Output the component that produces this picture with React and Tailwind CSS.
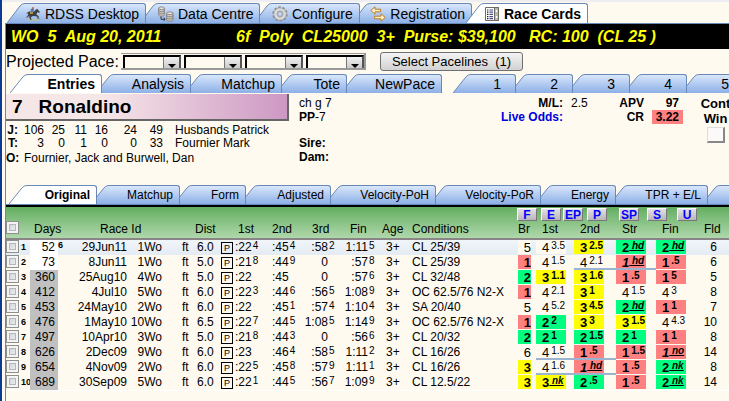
import { useState } from "react";

const mainTabs = [
  { label: "RDSS Desktop", width: "w-[139px]", icon: HorseIcon },
  { label: "Data Centre", width: "w-[120px]", icon: DatabaseIcon },
  { label: "Configure", width: "w-[104px]", icon: GearIcon },
  { label: "Registration", width: "w-[120px]", icon: ArrowsIcon },
  { label: "Race Cards", width: "w-[122px]", icon: CardIcon },
];

const entryTabs = [
  { label: "Entries", width: "w-[92px]" },
  { label: "Analysis", width: "w-[95px]" },
  { label: "Matchup", width: "w-[97px]" },
  { label: "Tote", width: "w-[71px]" },
  { label: "NewPace", width: "w-[101px]" },
];

const raceTabs = ["1", "2", "3", "4", "5"].map((label) => ({
  label,
  width: "w-[63px]",
}));

const viewTabs = [
  { label: "Original", width: "w-[88px]" },
  { label: "Matchup", width: "w-[89px]" },
  { label: "Form", width: "w-[72px]" },
  { label: "Adjusted", width: "w-[91px]" },
  { label: "Velocity-PoH", width: "w-[111px]" },
  { label: "Velocity-PoR", width: "w-[111px]" },
  { label: "Energy", width: "w-[81px]" },
  { label: "TPR + E/L", width: "w-[98px]" },
  { label: "", width: "w-[98px]" },
];

const colWidths = [
  "w-[24px]", "w-[36px]", "w-[61px]", "w-[35px]", "w-[35px]", "w-[24px]",
  "w-[14px]", "w-[37px]", "w-[28px]", "w-[34px]", "w-[40px]", "w-[38px]",
  "w-[106px]", "w-[18px]", "w-[38px]", "w-[42px]", "w-[40px]", "w-[40px]",
];

// Calls are [position, margin, colour]: g = gain, y = close, r = lead
const rows = [
  { days: "52", off: "6", date: "29Jun11", race: "1Wo", dist: "6.0", t: [":22 4", ":45 4", ":58 2", "1:11 5"], cond: "CL 25/39", br: ["5", ""], calls: [["4", "3.5", ""], ["3", "2.5", "y"], ["2", "hd", "g"], ["2", "hd", "g"]], fld: 6 },
  { days: "73", date: "8Jun11", race: "1Wo", dist: "5.0", t: [":21 8", ":44 9", "0", ":57 8"], cond: "CL 25/39", br: ["1", "r"], calls: [["4", "1.5", ""], ["4", "2.1", ""], ["1", "hd", "r"], ["1", ".5", "r"]], fld: 6, line: [1, 2] },
  { days: "360", date: "25Aug10", race: "4Wo", dist: "5.0", t: [":22", ":45", "0", ":57 6"], cond: "CL 32/48", br: ["2", "g"], calls: [["3", "1.1", "y"], ["3", "1.6", "y"], ["1", ".5", "r"], ["1", "5", "r"]], fld: 5 },
  { days: "412", date: "4Jul10", race: "5Wo", dist: "6.0", t: [":22 3", ":44 6", ":56 5", "1:08 9"], cond: "OC 62.5/76 N2-X", br: ["1", "r"], calls: [["4", "2.1", ""], ["3", "1", "y"], ["4", "1.5", ""], ["4", "3", ""]], fld: 8 },
  { days: "453", date: "24May10", race: "2Wo", dist: "6.0", t: [":22", ":45 1", ":57 4", "1:10 4"], cond: "SA 20/40", br: ["5", ""], calls: [["4", "5.2", ""], ["3", "4.5", "y"], ["2", "hd", "g"], ["1", "1", "r"]], fld: 7 },
  { days: "476", date: "1May10", race: "10Wo", dist: "6.5", t: [":22 7", ":44 5", "1:08 5", "1:14 9"], cond: "OC 62.5/76 N2-X", br: ["1", "r"], calls: [["2", "2", "g"], ["3", "3", "y"], ["3", "1.5", "y"], ["4", "4.3", ""]], fld: 10 },
  { days: "497", date: "10Apr10", race: "3Wo", dist: "5.0", t: [":21 8", ":44 3", "0", ":56 6"], cond: "CL 20/32", br: ["2", "g"], calls: [["2", "1", "g"], ["2", "1.5", "g"], ["2", "1", "g"], ["1", "1", "r"]], fld: 8 },
  { days: "626", date: "2Dec09", race: "9Wo", dist: "6.0", t: [":23", ":46 4", ":58 5", "1:11 2"], cond: "CL 16/26", br: ["6", ""], calls: [["4", "1.5", ""], ["1", ".5", "r"], ["1", "1.5", "r"], ["1", "no", "r"]], fld: 14, line: [0, 1] },
  { days: "654", date: "4Nov09", race: "2Wo", dist: "6.0", t: [":22 5", ":45 8", ":57 9", "1:11 1"], cond: "CL 16/26", br: ["3", "y"], calls: [["4", "1.6", ""], ["1", "hd", "r"], ["1", ".5", "r"], ["2", "nk", "g"]], fld: 8, line: [0, 1] },
  { days: "689", date: "30Sep09", race: "5Wo", dist: "6.0", t: [":22 1", ":44 5", ":56 7", "1:09 9"], cond: "CL 12.5/22", br: ["3", "y"], calls: [["3", "nk", "y"], ["2", ".5", "g"], ["1", ".5", "r"], ["2", "nk", "g"]], fld: 14 },
];

const callColors = {
  g: "bg-[#00ff80] font-bold",
  y: "bg-[#ffff00] font-bold",
  r: "bg-[#ff8080] font-bold",
  "": "bg-[#fffaf0]",
};

function HorseIcon() {
  return (
    <svg viewBox="0 0 16 16" className="h-4 w-4">
      <path d="M3 13h11v1.5H3z" fill="#b9c48f" />
      <path d="M1 7.5 4 5.6l5 .2 2.2-2.6 1.4-.2.5 1 1.9 2-.9.8-1.8-.6-1 2.4 2.5 1.6-.3 2-1-.2v-1.2l-3-.8-2.2.2-1.6 1.4 1 2.2-1.2.3-1.4-2.9.5-1.6-1.4 1.4-2 .3 1.8-2.1.3-1.7z" fill="#3d3f44" />
      <path d="M5.5 3.2 8 2l1 1.4-.6 2.8H6z" fill="#5578a8" />
      <path d="M7 1.2h1.8v1.5H7z" fill="#c8553a" />
      <path d="M5 6.2h3v1.6H5z" fill="#d9a441" />
      <path d="M1.5 11.5 4 10.4M12 12.4l2.5.2" stroke="#777" />
    </svg>
  );
}

function DatabaseIcon() {
  return (
    <svg viewBox="0 0 16 16" className="h-4 w-4" stroke="#77746f" strokeWidth=".8">
      <path d="M.7 2.3v6.4c0 2 5.6 2 5.6 0V2.3z" fill="#cdc9c2" />
      <ellipse cx="3.5" cy="2.2" rx="2.8" ry="1.3" fill="#efede8" />
      <path d="M.7 4.4c0 1.8 5.6 1.8 5.6 0M.7 6.6c0 1.8 5.6 1.8 5.6 0" fill="none" />
      <path d="M8.7 7.3v6.4c0 2 6.3 2 6.3 0V7.3z" fill="#cdc9c2" />
      <ellipse cx="11.8" cy="7.2" rx="3.1" ry="1.3" fill="#efede8" />
      <path d="M8.7 9.4c0 1.8 6.3 1.8 6.3 0M8.7 11.6c0 1.8 6.3 1.8 6.3 0" fill="none" />
      <path d="M3 10.5v2.8h4M5.6 11.8 7.2 13.3 5.6 14.8" fill="none" stroke="#333" strokeWidth="1" />
    </svg>
  );
}

function GearIcon() {
  return (
    <svg viewBox="0 0 16 16" className="h-4 w-4">
      <circle cx="8" cy="8" r="6.6" fill="none" stroke="#8e8e8e" strokeWidth="2.2" strokeDasharray="2.6 1.55" />
      <circle cx="8" cy="8" r="4.5" fill="none" stroke="#a6a6a6" strokeWidth="3.8" />
      <circle cx="8" cy="8" r="4.6" fill="none" stroke="#dcdcdc" strokeWidth="2.4" />
      <circle cx="8" cy="8" r="2.3" fill="#c5d8f3" stroke="#8e8e8e" strokeWidth=".6" />
    </svg>
  );
}

function ArrowsIcon() {
  return (
    <svg viewBox="0 0 16 16" className="h-4 w-4" fill="#fff1c9" stroke="#c07c1c" strokeLinejoin="round">
      <path d="M.8 4.5 5 .8v2.4h5.6v2.6H5v2.4z" />
      <path d="M15.2 11.5 11 7.8v2.4H4.6v2.6H11v2.4z" />
    </svg>
  );
}

function CardIcon() {
  return (
    <svg viewBox="0 0 16 16" className="h-4 w-4">
      <path d="M1.5 1.5h13v13h-13z" fill="#fff" stroke="#6b6a62" />
      <path d="M10.5 1.5h4v13h-4z" fill="#b9b7a6" stroke="#6b6a62" />
      <path d="M3 4h1.4M3 6.2h1.4M3 8.4h1.4M3 10.6h1.4M3 12.6h1.4" stroke="#222" strokeWidth="1.2" />
      <path d="M5.4 4h3.6M5.4 6.2h3.6M5.4 8.4h3.6M5.4 10.6h3.6M5.4 12.6h3.6" stroke="#4a4f8c" strokeWidth="1.2" />
      <path d="M11.8 4h1.5v2h-1.5zM11.8 10h1.5v2h-1.5z" fill="#fff" />
    </svg>
  );
}

function Tab({ tab, active, onClick, zIndex, textClass, padClass }) {
  const Icon = tab.icon;
  return (
    <button
      type="button"
      role="tab"
      aria-selected={active}
      onClick={onClick}
      style={{ zIndex }}
      className={`relative -ml-1.5 flex h-full shrink-0 first:ml-0 ${tab.width}`}
    >
      <svg viewBox="0 0 18 20" preserveAspectRatio="none" className="h-full w-[18px] shrink-0">
        <path d="M0 20 13 3Q15 .5 18 .5V20z" fill={active ? "#fff" : "url(#tabFill)"} />
        <path d="M0 20 13 3Q15 .5 18 .5" fill="none" stroke="#6888b8" />
      </svg>
      <span
        className={`flex h-full flex-1 items-center justify-end gap-1 rounded-tr-[3px] border-t border-r border-[#6888b8] whitespace-nowrap ${padClass} ${textClass} ${
          active ? "bg-white font-bold" : "bg-linear-to-b from-[#d9e7fb] to-[#8db0e6]"
        }`}
      >
        {Icon && <Icon />}
        {tab.label}
      </span>
    </button>
  );
}

function TabStrip({ label, tabs, initial, textClass, padClass = "pr-1.5", className }) {
  const [selected, setSelected] = useState(initial);
  return (
    <div role="tablist" aria-label={label} className={`isolate flex ${className}`}>
      {tabs.map((tab, i) => (
        <Tab
          key={i}
          tab={tab}
          active={selected === i}
          onClick={() => setSelected(i)}
          zIndex={selected === i ? 50 : tabs.length - i}
          textClass={textClass}
          padClass={padClass}
        />
      ))}
    </div>
  );
}

function PaceSelect({ index }) {
  return (
    <span className="relative flex h-[13px] w-[58px] border-2 border-b-0 border-t-black border-l-black border-r-[#555] bg-[#fffaf0]">
      <select aria-label={`Projected pace ${index}`} className="h-full w-full appearance-none text-xs outline-none">
        <option value=""></option>
        <option>Early</option>
        <option>Late</option>
      </select>
      <span className="pointer-events-none absolute top-0 right-0 flex h-full w-4 items-end justify-center border-l border-[#777] bg-linear-to-b from-[#f2f2f2] to-[#c9c9c9]">
        <svg viewBox="0 0 8 4" className="h-1 w-2">
          <path d="M0 0h8L4 4z" fill="#000" />
        </svg>
      </span>
    </span>
  );
}

function Box({ label }) {
  return (
    <input
      type="checkbox"
      aria-label={label}
      className="block h-[13px] w-[13px] shrink-0 appearance-none border border-[#8e8f8f] bg-linear-to-br from-[#c9cdd2] to-[#f6f6f6] shadow-[inset_0_0_0_2px_#f4f4f4,inset_0_0_0_3px_#b5b8bb] checked:bg-[#6888b8]"
    />
  );
}

function Time({ value, className = "justify-end" }) {
  const [main, tenth] = value.split(" ");
  return (
    <span className={`flex h-[15px] ${className}`}>
      {main}
      <span className="w-1.5 pl-px text-[10px] leading-[12px]">{tenth}</span>
    </span>
  );
}

function Call({ call, lined }) {
  const [pos, margin, color] = call;
  const isWord = /[a-z]/.test(margin);
  return (
    <div className="relative">
      <div className={`mb-px flex h-[14px] w-[30px] pl-1.5 leading-[15px] ${callColors[color]}`}>
        <span className={`text-[13px] ${isWord && pos === "1" ? "italic" : ""}`}>{pos}</span>
        {isWord ? (
          <span className="text-[10px] leading-[12px] whitespace-pre italic underline"> {margin}</span>
        ) : (
          <span className="pl-0.5 text-[10px] leading-[12px]">{margin}</span>
        )}
      </div>
      {lined && <div className="absolute right-0 -bottom-px left-0 z-10 h-0.5 bg-[#9db3d2]" />}
    </div>
  );
}

function SortButton({ children, className }) {
  return (
    <button
      type="button"
      className={`h-[13px] w-5 border border-t-white border-r-[#777] border-b-[#777] border-l-white bg-linear-to-b from-[#e4e0e4] to-[#b9b5b9] text-center text-xs leading-[12px] font-bold text-[#0000ff] ${className}`}
    >
      {children}
    </button>
  );
}

function RaceHeader() {
  return (
    <header className="flex h-[25px] items-center bg-black pl-[5px] text-base font-bold whitespace-pre text-[#ffff00] italic">
      <h1 className="w-[225px]">{"WO  5  Aug 20, 2011"}</h1>
      <p>{"6f  Poly  CL25000  3+  Purse: $39,100   RC: 100  (CL 25 )"}</p>
    </header>
  );
}

function HorsePanel() {
  return (
    <section className="flex h-[92px] justify-between pt-px text-xs leading-[14px] whitespace-nowrap">
      <div className="w-[283px] shrink-0">
        <h2 className="flex h-[27px] items-center gap-4 border-r-2 border-b-2 border-[#666] bg-linear-to-r from-[#f5e6e8] from-35% to-[#cd98c3] pl-1.5 text-[19px] font-bold">
          <span>7</span>
          <span>Ronaldino</span>
        </h2>
        <table className="mt-[3px] table-fixed text-right leading-[13px]">
          <tbody>
            {[
              ["J:", 106, 25, 11, 16, 24, 49, "Husbands Patrick"],
              ["T:", 3, 0, 1, 0, 0, 33, "Fournier Mark"],
            ].map(([role, a, b, c, d, e, f, name]) => (
              <tr key={role}>
                <th scope="row" className="w-[12px]">{role}</th>
                <td className="w-[26px]">{a}</td>
                <td className="w-[21px]">{b}</td>
                <td className="w-[22px]">{c}</td>
                <td className="w-[21px]">{d}</td>
                <td className="w-[29px]">{e}</td>
                <td className="w-[26px]">{f}</td>
                <td className="pl-3 text-left">{name}</td>
              </tr>
            ))}
          </tbody>
        </table>
        <p className="mt-px">
          <b className="inline-block w-[18px]">O:</b>Fournier, Jack and Burwell, Dan
        </p>
      </div>
      <div className="flex-1 pt-0.5 pl-2.5">
        <p>ch g 7</p>
        <p><b>PP</b>-7</p>
        <p className="mt-3 font-bold">Sire:</p>
        <p className="font-bold">Dam:</p>
      </div>
      <dl className="grid h-fit grid-cols-[81px_29px_36px_31px] gap-x-2 pt-0.5 font-bold">
        <dt className="text-right">M/L:</dt>
        <dd className="font-normal">2.5</dd>
        <dt className="text-right">APV</dt>
        <dd className="pr-1 text-right">97</dd>
        <dt className="text-right text-[#0000e0]">Live Odds:</dt>
        <dd></dd>
        <dt className="text-right">CR</dt>
        <dd className="bg-[#ff8080] pr-1 text-right">3.22</dd>
      </dl>
      <label className="ml-[19px] flex w-[27px] shrink-0 flex-col items-center pt-0.5 text-[13px] leading-[15px] font-bold">
        <span>Cont</span>
        <span>Win</span>
        <input
          type="checkbox"
          className="mt-px h-4 w-[18px] appearance-none border border-t-[#ddd] border-r-2 border-r-[#888] border-b-2 border-b-[#888] border-l-[#ddd] bg-[#fcfaf8] checked:bg-[#6888b8]"
        />
      </label>
    </section>
  );
}

function PastPerformances() {
  return (
    <table className="w-full table-fixed border-separate border-spacing-0 text-xs leading-[15px] whitespace-nowrap">
      <colgroup>
        {colWidths.map((width, i) => (
          <col key={i} className={width} />
        ))}
        <col />
      </colgroup>
      <thead className="bg-linear-to-b from-[#62ae60] to-[#b4dab0] [&_th]:p-0 [&_th]:font-normal">
        <tr className="h-[14px]">
          <th colSpan={13}></th>
          <th colSpan={6}>
            <div className="-ml-px flex pt-px">
              <SortButton>F</SortButton>
              <SortButton className="ml-1">E</SortButton>
              <SortButton className="ml-0.5">EP</SortButton>
              <SortButton className="ml-1">P</SortButton>
              <SortButton className="ml-3">SP</SortButton>
              <SortButton className="ml-2">S</SortButton>
              <SortButton className="ml-2.5">U</SortButton>
            </div>
          </th>
        </tr>
        <tr className="h-[19px] text-left [&_th]:border-b-2 [&_th]:border-[#8a8486]">
          <th className="align-top"><Box label="Select all" /></th>
          <th><span className="pl-1">Days</span></th>
          <th colSpan={2}><span className="pl-[34px]">Race Id</span></th>
          <th colSpan={2}><span className="pl-[33px]">Dist</span></th>
          <th colSpan={2}><span className="pl-[17px]">1st</span></th>
          <th>2nd</th>
          <th><span className="pl-3">3rd</span></th>
          <th><span className="pl-4">Fin</span></th>
          <th><span className="pl-2">Age</span></th>
          <th>Conditions</th>
          <th>Br</th>
          <th><span className="pl-1.5">1st</span></th>
          <th><span className="pl-1.5">2nd</span></th>
          <th><span className="pl-1.5">Str</span></th>
          <th><span className="pl-1.5">Fin</span></th>
          <th><span className="pl-2">Fld</span></th>
        </tr>
      </thead>
      <tbody>
        {rows.map((row, i) => (
          <tr
            key={row.date}
            className={`h-[15px] [&_td]:p-0 ${i === 0 ? "bg-linear-to-b from-[#f0f5f9] to-[#e4ebf3]" : ""}`}
          >
            <td>
              <div className="flex h-[15px] gap-0.5 overflow-hidden">
                <Box label={`Select race ${i + 1}`} />
                <b className="text-[9px] leading-[14px]">{i + 1}</b>
              </div>
            </td>
            <td>
              <div className="flex h-[15px]">
                <span className={`w-7 pr-[3px] text-right ${i < 2 ? "bg-white" : "bg-[#c0c0c0]"}`}>{row.days}</span>
                <b className="text-[9px] leading-[11px]">{row.off}</b>
              </div>
            </td>
            <td className="text-right">{row.date}</td>
            <td className="text-right">{row.race}</td>
            <td><span className="pl-5">ft</span></td>
            <td>{row.dist}</td>
            <td>
              <div className="h-3 w-3 border border-black text-center text-[9px] leading-[10px]">P</div>
            </td>
            <td><Time value={row.t[0]} className="justify-start" /></td>
            <td><Time value={row.t[1]} className="justify-start" /></td>
            <td><Time value={row.t[2]} /></td>
            <td><Time value={row.t[3]} /></td>
            <td><span className="pl-3">3+</span></td>
            <td>{row.cond}</td>
            <td>
              <div className={`mb-px h-[14px] w-[13px] text-right text-[13px] leading-[15px] ${callColors[row.br[1]]}`}>
                {row.br[0]}
              </div>
            </td>
            {row.calls.map((call, n) => (
              <td key={n}>
                <Call call={call} lined={row.line?.includes(n)} />
              </td>
            ))}
            <td><div className="w-[21px] text-right">{row.fld}</div></td>
          </tr>
        ))}
      </tbody>
    </table>
  );
}

export default function App() {
  return (
    <div className="flex min-h-screen w-full flex-col overflow-hidden border-l-2 border-[#0b3a94] bg-[#fffaf0] font-['Liberation_Sans',Arial,sans-serif] text-black">
      <svg width="0" height="0" className="absolute">
        <defs>
          <linearGradient id="tabFill" x1="0" y1="0" x2="0" y2="1">
            <stop offset="0" stopColor="#d9e7fb" />
            <stop offset="1" stopColor="#8db0e6" />
          </linearGradient>
        </defs>
      </svg>

      <div className="border-t-2 border-[#eeeef2] pt-px">
        <TabStrip label="Main" tabs={mainTabs} initial={4} textClass="text-sm" className="h-5 pl-[5px]" />
      </div>

      <main className="ml-[3px] flex-1 border-t border-l border-[#6888b8]">
        <RaceHeader />

        <div className="flex h-[25px] items-center">
          <span className="w-[115px] text-base whitespace-nowrap">Projected Pace:</span>
          <div className="flex shrink-0 gap-[3px] border-t border-r-2 border-b-2 border-[#999] bg-[#fffaf0] pt-px pl-0.5">
            {[1, 2, 3, 4].map((n) => (
              <PaceSelect key={n} index={n} />
            ))}
          </div>
          <button
            type="button"
            className="ml-3.5 h-[19px] w-[143px] shrink-0 rounded-[3px] border border-[#707070] bg-linear-to-b from-[#f4f4f4] to-[#d2d2d2] text-[13px] leading-[17px] whitespace-pre"
          >
            {"Select Pacelines  (1)"}
          </button>
        </div>

        <div className="flex h-[19px] gap-[11px] pl-1">
          <TabStrip label="Entry views" tabs={entryTabs} initial={0} textClass="text-sm" className="h-full" />
          <TabStrip label="Races" tabs={raceTabs} initial={-1} textClass="text-sm" padClass="pr-3.5" className="h-full" />
        </div>

        <HorsePanel />

        <TabStrip
          label="Past performance views"
          tabs={viewTabs}
          initial={0}
          textClass="text-xs"
          className="h-5 border-b border-[#6888b8] pl-[3px]"
        />
        <div className="border-t-2 border-b border-t-black border-b-white">
          <PastPerformances />
        </div>
      </main>
    </div>
  );
}
